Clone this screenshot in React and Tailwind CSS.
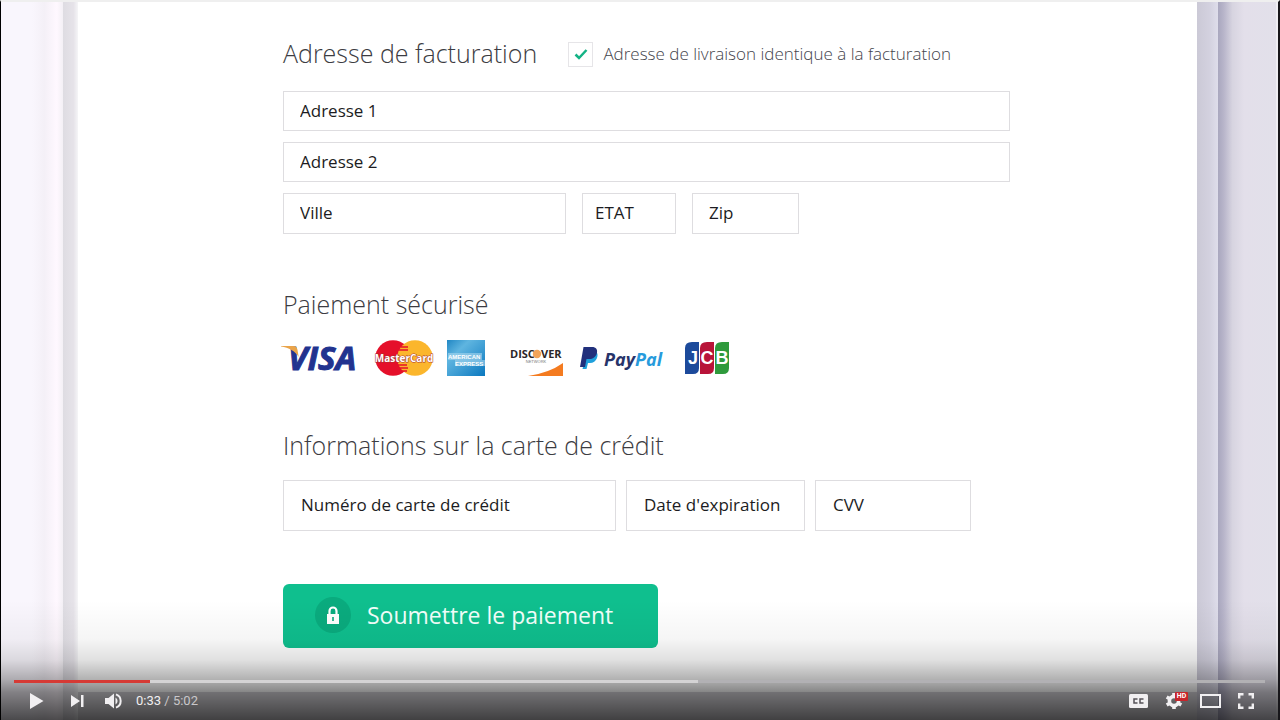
import React from "react";

const field =
  "min-w-0 border border-[#dedde0] bg-white pb-0.5 text-[17px] text-[#1c1c22] placeholder:text-[#1c1c22] placeholder:opacity-100 outline-none focus:border-[#0fbd8b]";
const heading = "pb-0.5 text-[25px] leading-[38px] font-light text-[#3c3c42]";

function Field({ label, className }) {
  return (
    <input type="text" aria-label={label} placeholder={label} className={`${field} ${className}`} />
  );
}

function Visa() {
  return (
    <svg role="img" aria-label="Visa" width="80" height="38" viewBox="0 0 80 38" className="overflow-visible">
      <text x="5" y="31" fontFamily="'Open Sans', sans-serif" fontWeight="700" fontStyle="italic" fontSize="33" fill="#22338f" stroke="#22338f" strokeWidth="1">
        VISA
      </text>
      <path d="M-2 7h12c3 0 4 1.500 4.500 4l1.200 7C12 12 6 8.500-2 7.500z" fill="#eaa449" />
    </svg>
  );
}

function MasterCard() {
  return (
    <svg role="img" aria-label="MasterCard" width="60" height="38" viewBox="0 0 60 38" className="overflow-visible">
      <circle cx="18" cy="19" r="17.800" fill="#e5102a" />
      <circle cx="40" cy="19" r="17.800" fill="#fbb62c" />
      <path d="M26 8h7M24 11h9M23 26h9M24 29h9M27 32h5" stroke="#e5102a" strokeWidth="1.500" />
      <text x="29" y="23" textAnchor="middle" fontFamily="'Open Sans', sans-serif" fontWeight="700" fontSize="10" fill="#fff" stroke="#a33" strokeWidth="1" paintOrder="stroke">
        MasterCard
      </text>
    </svg>
  );
}

function Amex() {
  return (
    <svg role="img" aria-label="American Express" width="38" height="38" viewBox="0 0 38 38">
      <defs>
        <linearGradient id="amex" x1="0" y1="0" x2="1" y2="1">
          <stop offset="0" stopColor="#2187c4" />
          <stop offset=".3" stopColor="#5fb5e0" />
          <stop offset="1" stopColor="#0b78bf" />
        </linearGradient>
      </defs>
      <rect y="1" width="38" height="36" fill="url(#amex)" />
      <path d="M1 14h34v7h-34zM8 21h30v6h-30z" fill="#a9d7ee" opacity=".6" />
      <g fontFamily="'Liberation Sans', sans-serif" fontWeight="700" fontSize="6" fill="#fff">
        <text x="1" y="19.500">AMERICAN</text>
        <text x="8" y="26.500">EXPRESS</text>
      </g>
    </svg>
  );
}

function Discover() {
  return (
    <svg role="img" aria-label="Discover Network" width="56" height="38" viewBox="0 0 56 38">
      <g fontFamily="'Open Sans', sans-serif" fontWeight="700" fontSize="11" fill="#2b2628">
        <text x="1" y="19">DISC</text>
        <text x="32" y="19">VER</text>
      </g>
      <circle cx="28" cy="15" r="4.200" fill="#f3a45a" />
      <text x="27" y="24" textAnchor="middle" fontFamily="'Liberation Sans', sans-serif" fontSize="4" fill="#777">
        NETWORK
      </text>
      <path d="M19 37Q40 34 54 24v13z" fill="#f47b20" />
    </svg>
  );
}

function PayPal() {
  return (
    <svg role="img" aria-label="PayPal" width="86" height="38" viewBox="0 0 86 38">
      <path d="M8 12h6c4 0 5.500 3 4 7-1 3-4 5-7 5h-2l-1.500 6H3.500z" fill="#1fa0dc" />
      <path d="M4.500 8h8.500c4 0 6 2.500 4.800 6.500-1 3.500-4 5.500-7.300 5.500H7.500L6 28H1z" fill="#21307c" />
      <text x="25" y="27" fontFamily="'Open Sans', sans-serif" fontWeight="700" fontStyle="italic" fontSize="18" fill="#27346a">
        Pay<tspan fill="#279bdc">Pal</tspan>
      </text>
    </svg>
  );
}

function Jcb() {
  return (
    <svg role="img" aria-label="JCB" width="46" height="38" viewBox="0 0 46 38">
      <path d="M7 3h7v26q0 6-6 6H0V9q0-6 7-6z" fill="#1c4a9b" />
      <path d="M22 3h7v26q0 6-6 6h-8V9q0-6 7-6z" fill="#b81439" />
      <path d="M37 3h7v26q0 6-6 6h-8V9q0-6 7-6z" fill="#2f9a3c" />
      <g textAnchor="middle" fontFamily="'Liberation Sans', sans-serif" fontWeight="700" fontSize="18" fill="#fff">
        <text x="8" y="25">J</text>
        <text x="22" y="25">C</text>
        <text x="37" y="25">B</text>
      </g>
    </svg>
  );
}

function PaymentForm() {
  return (
    <form className="w-full max-w-[727px] pt-8" onSubmit={(e) => e.preventDefault()}>
      <div className="flex h-10 items-center justify-between pr-[59px]">
        <h2 className={heading}>Adresse de facturation</h2>
        <div className="flex items-center gap-2.5">
          <span className="grid size-[25px] place-items-center">
            <input
              id="same-address"
              type="checkbox"
              defaultChecked
              className="peer col-start-1 row-start-1 size-full appearance-none border border-[#e6e5e8] bg-white"
            />
            <svg className="pointer-events-none invisible col-start-1 row-start-1 peer-checked:visible" width="14" height="12" viewBox="0 0 14 12">
              <path d="M1.500 6.500L5 10L12.500 2" fill="none" stroke="#14b385" strokeWidth="2.500" />
            </svg>
          </span>
          <label htmlFor="same-address" className="text-[17px] leading-6 font-light text-[#44444c]">
            Adresse de livraison identique à la facturation
          </label>
        </div>
      </div>

      <div className="mt-[17px] flex flex-col gap-[11px]">
        <Field label="Adresse 1" className="h-10 w-full px-4" />
        <Field label="Adresse 2" className="h-10 w-full px-4" />
        <div className="flex gap-4">
          <Field label="Ville" className="h-[41px] w-[283px] px-4" />
          <Field label="ETAT" className="h-[41px] w-[94px] px-3" />
          <Field label="Zip" className="h-[41px] w-[107px] px-4" />
        </div>
      </div>

      <h2 className={`mt-[51px] ${heading}`}>Paiement sécurisé</h2>
      <div className="mt-3.5 flex h-[38px] items-center">
        <Visa />
        <span className="ml-3 flex"><MasterCard /></span>
        <span className="ml-3 flex"><Amex /></span>
        <span className="ml-6 flex"><Discover /></span>
        <span className="ml-3.5 flex"><PayPal /></span>
        <span className="ml-5 flex"><Jcb /></span>
      </div>

      <h2 className={`mt-[49px] ${heading}`}>Informations sur la carte de crédit</h2>
      <div className="mt-3.5 flex gap-2.5">
        <Field label="Numéro de carte de crédit" className="h-[51px] w-[333px] px-[17px]" />
        <Field label="Date d'expiration" className="h-[51px] w-[179px] px-[17px]" />
        <Field label="CVV" className="h-[51px] w-[156px] px-[17px]" />
      </div>

      <button type="submit" className="mt-[53px] flex h-16 w-[375px] items-center gap-4 rounded-md bg-[#0fbf8e] pb-0.5 pl-8 text-[23px] text-[#f2fffb]">
        <span className="grid size-9 place-items-center rounded-full bg-[#0aab7e]">
          <svg width="14" height="18" viewBox="0 0 14 18">
            <path d="M3.500 9V5a3.500 3.500 0 0 1 7 0v4" fill="none" stroke="#fff" strokeWidth="2.200" />
            <path d="M1 8h12v10H1z" fill="#fff" />
            <path d="M7 11v4" stroke="#0aa87b" strokeWidth="1.600" />
          </svg>
        </span>
        Soumettre le paiement
      </button>
    </form>
  );
}

function Controls() {
  const btn = "flex items-center justify-center";
  return (
    <div className="absolute inset-x-0 bottom-0 flex h-[120px] flex-col justify-end bg-[linear-gradient(to_bottom,transparent,rgba(0,0,0,0.04)_33%,rgba(0,0,0,0.12)_50%,rgba(0,0,0,0.30)_66%,rgba(0,0,0,0.48)_77%,rgba(0,0,0,0.70))] px-[13px] pb-px">
      <input
        type="range"
        aria-label="Position de lecture"
        min="0"
        max="302"
        defaultValue="33"
        className="h-[3px] w-full appearance-none bg-[linear-gradient(to_right,#d63a35_10.9%,#d4d3d4_10.9%,#d4d3d4_54.7%,#b2b1b4_54.7%)] [&::-webkit-slider-thumb]:h-0 [&::-webkit-slider-thumb]:w-0 [&::-webkit-slider-thumb]:appearance-none"
      />
      <div className="flex h-9 items-center justify-between pr-px pl-[3px] text-[#f1eff1]">
        <div className="flex items-center">
          <button type="button" aria-label="Lecture" className={`${btn} w-10`}>
            <svg width="14" height="16" viewBox="0 0 14 16" fill="currentColor"><path d="M0 0l13.500 8L0 16z" /></svg>
          </button>
          <button type="button" aria-label="Suivant" className={`${btn} w-10`}>
            <svg width="13" height="12" viewBox="0 0 13 12" fill="currentColor"><path d="M0 0l9 6-9 6zM10 0h2.500v12H10z" /></svg>
          </button>
          <button type="button" aria-label="Volume" className={`${btn} w-8`}>
            <svg width="17" height="16" viewBox="0 0 17 16" fill="currentColor">
              <path d="M0 5h3.500L9 .5v15L3.500 11H0z" />
              <path d="M10.500 4.500a4 4 0 0 1 0 7z" />
              <path d="M11 1.400a7 7 0 0 1 0 13.200" fill="none" stroke="currentColor" strokeWidth="2" />
            </svg>
          </button>
          <span className="ml-[7px] font-[Roboto,sans-serif] text-[13px] text-[#c9c7ca]">
            <span className="text-[#f1eff1]">0:33</span> / 5:02
          </span>
        </div>
        <div className="flex items-center">
          <button type="button" aria-label="Sous-titres" className={`${btn} w-9`}>
            <svg width="19" height="14" viewBox="0 0 19 14">
              <rect width="19" height="14" rx="1.500" fill="currentColor" />
              <path d="M8.500 5H5v4h3.500M14.500 5H11v4h3.500" fill="none" stroke="#555358" strokeWidth="1.500" />
            </svg>
          </button>
          <button type="button" aria-label="Paramètres" className={`${btn} relative w-9`}>
            <svg width="18" height="18" viewBox="0 0 18 18" fill="none" stroke="currentColor">
              <circle cx="9" cy="9" r="4.600" strokeWidth="3.600" />
              <path d="M9 1v3M9 14v3M1.700 5l3 1.700M13.300 11.300l3 1.700M1.700 13l3-1.700M13.300 6.700l3-1.700" strokeWidth="3.600" />
            </svg>
            <span className="absolute top-0 right-1 flex h-[9px] w-[13px] items-center justify-center rounded-[1px] bg-[#c8252b] font-[Roboto,sans-serif] text-[7px] font-bold text-white">
              HD
            </span>
          </button>
          <button type="button" aria-label="Mode cinéma" className={`${btn} w-9`}>
            <svg width="21" height="14" viewBox="0 0 21 14" fill="none" stroke="currentColor" strokeWidth="2"><path d="M1 1h19v12H1z" /></svg>
          </button>
          <button type="button" aria-label="Plein écran" className={`${btn} w-9`}>
            <svg width="16" height="16" viewBox="0 0 16 16" fill="none" stroke="currentColor" strokeWidth="2.400">
              <path d="M1.200 5.500V1.200h4.300M10.500 1.200h4.300v4.300M14.800 10.500v4.300h-4.300M5.500 14.800H1.200v-4.300" />
            </svg>
          </button>
        </div>
      </div>
    </div>
  );
}

export default function App() {
  return (
    <div className="relative flex min-h-screen border-t-2 border-r-2 border-l border-t-[#efefef] border-r-[#17161a] border-l-black bg-[#d9d7dc] font-['Open_Sans',sans-serif]">
      <div className="w-[62px] shrink-0 bg-[linear-gradient(to_right,#f9f6fd_50%,#f4f0f7_70%,#fff8ff_90%,#f3f0f5)]" />
      <div className="w-[15px] shrink-0 bg-[linear-gradient(to_right,#dedce2,#e6e3e9_70%,#f5f5f7)]" />
      <main className="mb-7 flex-1 bg-white pl-[205px]">
        <PaymentForm />
      </main>
      <div className="w-[21px] shrink-0 bg-[linear-gradient(to_right,#cbc9d6,#d3d1df_60%,#deddea)]" />
      <div className="w-[60px] shrink-0 border-r-2 border-r-[#eeedf2] bg-[linear-gradient(to_right,#a9a7be,#b8b5ca_10%,#d7d4e0_25%,#e3dfea_45%,#e2e0ea)]" />
      <Controls />
    </div>
  );
}
